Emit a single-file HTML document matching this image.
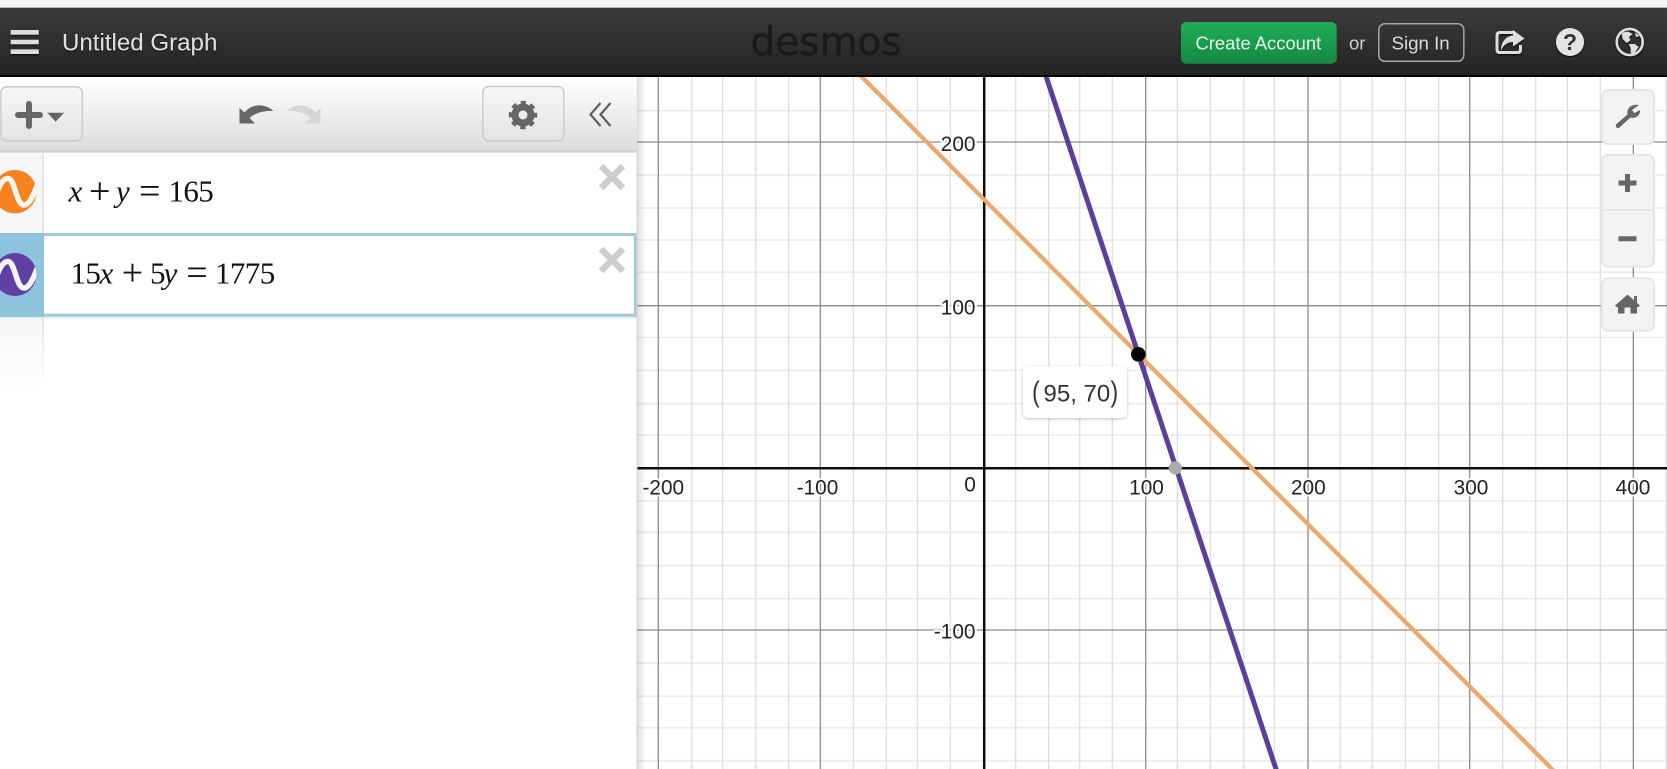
<!DOCTYPE html>
<html lang="en">
<head>
<meta charset="utf-8">
<title>Untitled Graph - Desmos</title>
<style>
html,body{margin:0;padding:0;background:#fff;width:1667px;height:769px;overflow:hidden}
svg{display:block;position:absolute;left:0;top:0}
text{font-family:"Liberation Sans",Arial,sans-serif}
.m{font-family:"Liberation Serif",serif;font-size:31px;fill:#111}
.o{font-family:"Liberation Serif",serif;font-size:38px;fill:#111}
.i{font-style:italic}
.l{font-size:20.8px;fill:#222;stroke:#fff;stroke-width:4px;paint-order:stroke;stroke-linejoin:round}
</style>
</head>
<body>
<svg width="1667" height="769" viewBox="0 0 1667 769" xmlns="http://www.w3.org/2000/svg">
<defs>
<linearGradient id="hd" x1="0" y1="0" x2="0" y2="1"><stop offset="0" stop-color="#3b3b3b"/><stop offset="1" stop-color="#242424"/></linearGradient>
<linearGradient id="tb" x1="0" y1="0" x2="0" y2="1"><stop offset="0" stop-color="#fff"/><stop offset="1" stop-color="#dddddd"/></linearGradient>
<linearGradient id="bt" x1="0" y1="0" x2="0" y2="1"><stop offset="0" stop-color="#f7f7f7"/><stop offset="1" stop-color="#e4e4e4"/></linearGradient>
<linearGradient id="gr" x1="0" y1="0" x2="0" y2="1"><stop offset="0" stop-color="#20ad58"/><stop offset="1" stop-color="#148a43"/></linearGradient>
<linearGradient id="sh" x1="0" y1="0" x2="1" y2="0"><stop offset="0" stop-color="#000" stop-opacity=".13"/><stop offset="1" stop-color="#000" stop-opacity="0"/></linearGradient>
<linearGradient id="fd" x1="0" y1="0" x2="0" y2="1"><stop offset="0" stop-color="#f6f6f6"/><stop offset="1" stop-color="#fff"/></linearGradient>
<linearGradient id="fb" x1="0" y1="0" x2="0" y2="1"><stop offset="0" stop-color="#e4e4e4"/><stop offset="1" stop-color="#fff"/></linearGradient>
<clipPath id="c1"><circle cx="15" cy="191.7" r="21.7"/></clipPath>
<clipPath id="c2"><circle cx="15" cy="274.5" r="21.5"/></clipPath>
<filter id="b" x="-5%" y="-5%" width="110%" height="110%"><feGaussianBlur stdDeviation="0.35"/></filter>
<filter id="ts" x="-20%" y="-30%" width="140%" height="170%"><feDropShadow dx="0" dy="1" stdDeviation="0.7" flood-color="#000" flood-opacity=".9"/></filter>
<filter id="tip" x="-20%" y="-20%" width="140%" height="150%"><feDropShadow dx="0" dy="1" stdDeviation="1.6" flood-color="#000" flood-opacity=".25"/></filter>
</defs>

<rect width="1667" height="769" fill="#fff"/>

<!-- grid -->
<g filter="url(#b)">
<path fill="none" stroke="#ebebeb" stroke-width="1.6" d="M637 110.7H1667M637 175.3H1667M637 208H1667M637 240H1667M637 272.3H1667M637 337.5H1667M637 370.3H1667M637 403.7H1667M637 435H1667M637 501H1667M637 532.3H1667M637 565.7H1667M637 598.7H1667M637 663.3H1667M637 696.3H1667M637 727.7H1667M637 760.7H1667"/>
<path fill="none" stroke="#e0e0e0" stroke-width="1.4" d="M691.7 77V769M722.7 77V769M755.7 77V769M788.7 77V769M853.3 77V769M886.3 77V769M917.3 77V769M950.3 77V769M1015.7 77V769M1048.7 77V769M1079.7 77V769M1112.3 77V769M1177.3 77V769M1210.3 77V769M1243.7 77V769M1274.3 77V769M1340.3 77V769M1372.3 77V769M1405.3 77V769M1438.7 77V769M1502.7 77V769M1535.7 77V769M1567.3 77V769M1600.3 77V769M1666 77V769"/>
<path fill="none" stroke="#8b8b8b" stroke-width="1.3" d="M637 142H1667M637 305.7H1667M637 630H1667M658.3 77V769M820.3 77V769M1145.7 77V769M1308 77V769M1469.7 77V769M1633.3 77V769"/>
<path fill="none" stroke="#111" stroke-width="2.5" d="M637 468.3H1667M984.2 77V769"/>
</g>

<!-- axis labels -->
<text class="l" x="663.3" y="494.3" text-anchor="middle">-200</text>
<text class="l" x="817.5" y="494.3" text-anchor="middle">-100</text>
<text class="l" x="970" y="491.3" text-anchor="middle">0</text>
<text class="l" x="1146.5" y="494.3" text-anchor="middle">100</text>
<text class="l" x="1308.3" y="494.3" text-anchor="middle">200</text>
<text class="l" x="1471" y="494.3" text-anchor="middle">300</text>
<text class="l" x="1633" y="494.3" text-anchor="middle">400</text>
<text class="l" x="975.5" y="151" text-anchor="end">200</text>
<text class="l" x="975.5" y="314.3" text-anchor="end">100</text>
<text class="l" x="975.5" y="638.7" text-anchor="end">-100</text>

<!-- curves -->
<line x1="856" y1="71" x2="1556" y2="773" stroke="#eda76d" stroke-width="4.2"/>
<line x1="1044.3" y1="71" x2="1278" y2="775" stroke="#5b3f9a" stroke-width="5"/>
<circle cx="1175.3" cy="468" r="6.6" fill="#ababab"/>
<circle cx="1138.3" cy="354.3" r="7.3" fill="#000"/>

<!-- tooltip -->
<rect x="1023" y="366" width="104" height="52" rx="6" fill="#fff" filter="url(#tip)"/>
<text x="1032" y="401.7" font-size="29" fill="#333" transform="translate(1032 0) scale(.8 1) translate(-1032 0)">(</text>
<text x="1043.5" y="401.7" font-size="24" fill="#333">95, 70</text>
<text x="1110.5" y="401.7" font-size="29" fill="#333" transform="translate(1110.5 0) scale(.8 1) translate(-1110.5 0)">)</text>

<!-- panel shadow -->
<rect x="637" y="77" width="9" height="692" fill="url(#sh)"/>

<!-- graph tools -->
<g fill="#f3f3f3" stroke="#e6e6e6" stroke-width="2">
<rect x="1602" y="90" width="52" height="54" rx="6"/>
<rect x="1602" y="155" width="52" height="111.500" rx="6"/>
<rect x="1602" y="278.300" width="52" height="52.500" rx="6"/>
</g>
<line x1="1602" y1="210" x2="1654" y2="210" stroke="#e0e0e0" stroke-width="1.5"/>
<path fill="#666" d="M1639 105C1632 103.500 1626 108 1627.500 114.500L1616.500 124C1614.500 126 1617 129.500 1619.500 127.500L1630.500 117.500C1635 119 1640.500 116 1640 110L1634.500 113L1632 110Z"/>
<path fill="#666" d="M1625 174h5v6.500h6.500v5h-6.500v6.500h-5v-6.500h-6.500v-5h6.500zM1618.500 236.300h18v5h-18z"/>
<path fill="#666" d="M1627.500 294.500L1634 300.200V296H1637V302.900L1640 305.600L1637.800 307.500L1637 306.800V313.500H1630.500V307.500H1624.500V313.500H1618V306.800L1617.200 307.500L1615 305.600Z"/>

<!-- header -->
<rect width="1667" height="7.500" fill="#f3f3f3"/>
<rect y="7" width="1667" height="1" fill="#b5b5b5"/>
<rect y="8" width="1667" height="67" fill="url(#hd)"/>
<rect y="75" width="1667" height="2" fill="#000"/>
<path fill="#dedede" filter="url(#ts)" d="M10.700 30h28v4.600h-28zM10.700 39.800h28v4.500h-28zM10.700 49.400h28v4.600h-28z"/>
<text x="62" y="50.700" font-size="24.100" fill="#dfdfdf" filter="url(#ts)">Untitled Graph</text>
<text x="750.500" y="55" font-size="39" fill="#1b1b1b" stroke="#1b1b1b" stroke-width=".5" style="font-family:'DejaVu Sans',sans-serif">desmos</text>

<rect x="1181" y="22" width="155.700" height="41.700" rx="5" fill="url(#gr)"/>
<text x="1195.500" y="49.300" font-size="18.400" fill="#e6f7ea">Create Account</text>
<text x="1349" y="49.300" font-size="18.500" fill="#d0d0d0">or</text>
<rect x="1378.800" y="23.800" width="85" height="37.500" rx="6" fill="none" stroke="#a5a5a5" stroke-width="1.500"/>
<text x="1391.500" y="49.300" font-size="18.700" fill="#dcdcdc">Sign In</text>

<!-- share -->
<g filter="url(#ts)">
<path fill="none" stroke="#dedede" stroke-width="3" stroke-linejoin="round" d="M1515 32.500H1500Q1497 32.500 1497 35.500V49.500Q1497 52.500 1500 52.500H1517.500Q1520.500 52.500 1520.500 49.500V45"/>
<path fill="#dedede" d="M1513 30L1524.500 38.500L1513 46.500V42C1508 42 1503.500 44.500 1501 50.500C1501 42 1506 36 1513 35.500Z"/>
<circle cx="1570" cy="42" r="14" fill="#e2e2e2"/>
<circle cx="1629.700" cy="42" r="13" fill="none" stroke="#dedede" stroke-width="2.500"/>
<path fill="#dedede" d="M1621.700 33L1627.700 31.500L1632.700 34L1628.700 37L1630.700 40L1626.700 43L1622.700 39ZM1628.700 44L1634.700 44L1638.700 47L1633.700 54L1630.700 53L1630.700 48ZM1635 32.500L1639.500 36L1636 37Z"/>
</g>
<text x="1570" y="50" font-size="23" font-weight="bold" fill="#333" text-anchor="middle">?</text>

<!-- panel -->
<rect x="0" y="77" width="637" height="692" fill="#fff"/>
<rect x="636.500" y="77" width="1" height="692" fill="#d5d5d5"/>
<rect x="0" y="77" width="637" height="73" fill="url(#tb)"/>
<rect x="0" y="150" width="637" height="2.700" fill="#cfcfcf"/>

<rect x="1" y="86.800" width="81.300" height="54" rx="6" fill="url(#bt)" stroke="#cbcbcb" stroke-width="1.500"/>
<path fill="#666" d="M26 104a3 3 0 0 1 6 0v8h8a3 3 0 0 1 0 6h-8v8a3 3 0 0 1-6 0v-8h-8a3 3 0 0 1 0-6h8z"/>
<path fill="#666" d="M47.300 112.700H64L55.700 121.700Z"/>

<path fill="#666" d="M239.500 108V123.500H255L249.500 118C255 113 264 110.500 273.500 111C266 104 253 102.500 244.500 112.500Z"/>
<path fill="#d6d6d6" d="M320.500 108V123.500H305L310.500 118C305 113 296 110.500 286.500 111C294 104 307 102.500 315.500 112.500Z"/>

<rect x="482.800" y="86.500" width="81" height="54.300" rx="6" fill="url(#bt)" stroke="#cbcbcb" stroke-width="1.500"/>
<circle cx="523" cy="115" r="8" fill="none" stroke="#666" stroke-width="7"/>
<circle cx="523" cy="115" r="12" fill="none" stroke="#666" stroke-width="4.500" stroke-dasharray="5 4.420" stroke-dashoffset="2.500"/>

<path fill="none" stroke="#5f5f5f" stroke-width="2.200" d="M600.500 103L590.500 114.500L600.500 126M610.500 103L600.500 114.500L610.500 126"/>

<!-- row 1 -->
<rect x="0" y="152.700" width="43" height="80.500" fill="#f6f6f6"/>
<rect x="42" y="152.700" width="2" height="80.500" fill="#e6e6e6"/>
<circle cx="15" cy="191.700" r="21.700" fill="#f5821f"/>
<path clip-path="url(#c1)" fill="none" stroke="#fff" stroke-width="5.500" opacity=".92" d="M-4 195C0 183 4 178.500 8 178.500C15 178.500 16 205 24 205C29 205 33 197 38 183"/>
<text class="m i" x="68.500" y="201.700">x</text>
<text class="o" x="89" y="203.500">+</text>
<text class="m i" x="116" y="201.700">y</text>
<text class="o" x="139" y="203.500">=</text>
<text class="m" x="168.500" y="201.700" letter-spacing="-.6">165</text>
<path stroke="#cdcdcd" stroke-width="6.500" d="M601 166L623 188M623 166L601 188"/>

<!-- row 2 -->
<rect x="0" y="233" width="44" height="84" fill="#8dc3dd"/>
<rect x="44" y="233" width="592.500" height="3" fill="#a2c9d9"/>
<rect x="44" y="313.700" width="592.500" height="3" fill="#a2c9d9"/>
<rect x="634" y="233" width="2.500" height="84" fill="#a2c9d9"/>
<rect x="0" y="317" width="637" height="1.500" fill="#e4edf1"/>
<circle cx="15" cy="274.500" r="21.500" fill="#5f41a5"/>
<path clip-path="url(#c2)" fill="none" stroke="#fff" stroke-width="5.500" opacity=".95" d="M-4 278C0 266 4 261.500 8 261.500C15 261.500 16 288 24 288C29 288 33 280 38 266"/>
<text class="m" x="70.500" y="283.300" letter-spacing="-.6">15</text>
<text class="m i" x="99.500" y="283.300">x</text>
<text class="o" x="121.700" y="285.100">+</text>
<text class="m" x="150" y="283.300">5</text>
<text class="m i" x="163.500" y="283.300">y</text>
<text class="o" x="186.300" y="285.100">=</text>
<text class="m" x="215" y="283.300" letter-spacing="-.6">1775</text>
<path stroke="#cdcdcd" stroke-width="6.500" d="M601 249L623 271M623 249L601 271"/>

<!-- row 3 fade -->
<rect x="0" y="318.500" width="42" height="72" fill="url(#fd)"/>
<rect x="42" y="318.500" width="2" height="72" fill="url(#fb)"/>
</svg>
</body>
</html>
